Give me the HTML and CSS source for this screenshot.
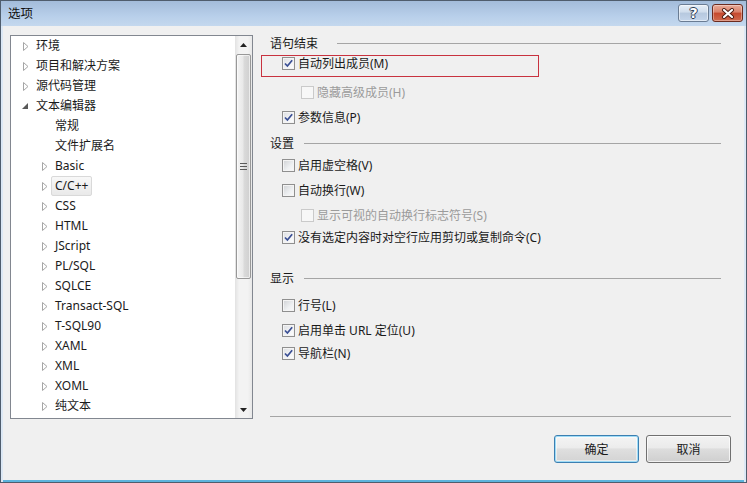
FILE: index.html
```html
<!DOCTYPE html>
<html lang="zh-CN">
<head>
<meta charset="utf-8">
<title>选项</title>
<link rel="stylesheet" href="styles.css">
</head>
<body>
<div class="window">
  <div class="titlebar">
    <span class="title">选项</span>
    <div class="caption-buttons">
      <div class="cap-btn help"><span class="q">?</span></div>
      <div class="cap-btn close">
        <svg width="14" height="11" viewBox="0 0 14 11"><path d="M3 2 L11 9 M11 2 L3 9" stroke="#4a1a10" stroke-width="4" stroke-linecap="round"/><path d="M3 2 L11 9 M11 2 L3 9" stroke="#ffffff" stroke-width="2.2" stroke-linecap="round"/></svg>
      </div>
    </div>
  </div>
  <div class="client">
    <div class="main">
      <div class="tree">
        <ul class="tree-list">
          <li class="node l1"><span class="exp"><svg width="6" height="9" viewBox="0 0 6 9"><path d="M0.5 0.5 L5 4.5 L0.5 8.5 Z" fill="#fff" stroke="#a6a6a6"/></svg></span><span class="label">环境</span></li>
          <li class="node l1"><span class="exp"><svg width="6" height="9" viewBox="0 0 6 9"><path d="M0.5 0.5 L5 4.5 L0.5 8.5 Z" fill="#fff" stroke="#a6a6a6"/></svg></span><span class="label">项目和解决方案</span></li>
          <li class="node l1"><span class="exp"><svg width="6" height="9" viewBox="0 0 6 9"><path d="M0.5 0.5 L5 4.5 L0.5 8.5 Z" fill="#fff" stroke="#a6a6a6"/></svg></span><span class="label">源代码管理</span></li>
          <li class="node l1"><span class="exp open"><svg width="6" height="6" viewBox="0 0 6 6"><path d="M6 0 L6 6 L0 6 Z" fill="#595959"/></svg></span><span class="label">文本编辑器</span></li>
          <li class="node l2"><span class="exp"></span><span class="label">常规</span></li>
          <li class="node l2"><span class="exp"></span><span class="label">文件扩展名</span></li>
          <li class="node l2"><span class="exp"><svg width="6" height="9" viewBox="0 0 6 9"><path d="M0.5 0.5 L5 4.5 L0.5 8.5 Z" fill="#fff" stroke="#a6a6a6"/></svg></span><span class="label">Basic</span></li>
          <li class="node l2"><span class="exp"><svg width="6" height="9" viewBox="0 0 6 9"><path d="M0.5 0.5 L5 4.5 L0.5 8.5 Z" fill="#fff" stroke="#a6a6a6"/></svg></span><span class="label selected">C/C++</span></li>
          <li class="node l2"><span class="exp"><svg width="6" height="9" viewBox="0 0 6 9"><path d="M0.5 0.5 L5 4.5 L0.5 8.5 Z" fill="#fff" stroke="#a6a6a6"/></svg></span><span class="label">CSS</span></li>
          <li class="node l2"><span class="exp"><svg width="6" height="9" viewBox="0 0 6 9"><path d="M0.5 0.5 L5 4.5 L0.5 8.5 Z" fill="#fff" stroke="#a6a6a6"/></svg></span><span class="label">HTML</span></li>
          <li class="node l2"><span class="exp"><svg width="6" height="9" viewBox="0 0 6 9"><path d="M0.5 0.5 L5 4.5 L0.5 8.5 Z" fill="#fff" stroke="#a6a6a6"/></svg></span><span class="label">JScript</span></li>
          <li class="node l2"><span class="exp"><svg width="6" height="9" viewBox="0 0 6 9"><path d="M0.5 0.5 L5 4.5 L0.5 8.5 Z" fill="#fff" stroke="#a6a6a6"/></svg></span><span class="label">PL/SQL</span></li>
          <li class="node l2"><span class="exp"><svg width="6" height="9" viewBox="0 0 6 9"><path d="M0.5 0.5 L5 4.5 L0.5 8.5 Z" fill="#fff" stroke="#a6a6a6"/></svg></span><span class="label">SQLCE</span></li>
          <li class="node l2"><span class="exp"><svg width="6" height="9" viewBox="0 0 6 9"><path d="M0.5 0.5 L5 4.5 L0.5 8.5 Z" fill="#fff" stroke="#a6a6a6"/></svg></span><span class="label">Transact-SQL</span></li>
          <li class="node l2"><span class="exp"><svg width="6" height="9" viewBox="0 0 6 9"><path d="M0.5 0.5 L5 4.5 L0.5 8.5 Z" fill="#fff" stroke="#a6a6a6"/></svg></span><span class="label">T-SQL90</span></li>
          <li class="node l2"><span class="exp"><svg width="6" height="9" viewBox="0 0 6 9"><path d="M0.5 0.5 L5 4.5 L0.5 8.5 Z" fill="#fff" stroke="#a6a6a6"/></svg></span><span class="label">XAML</span></li>
          <li class="node l2"><span class="exp"><svg width="6" height="9" viewBox="0 0 6 9"><path d="M0.5 0.5 L5 4.5 L0.5 8.5 Z" fill="#fff" stroke="#a6a6a6"/></svg></span><span class="label">XML</span></li>
          <li class="node l2"><span class="exp"><svg width="6" height="9" viewBox="0 0 6 9"><path d="M0.5 0.5 L5 4.5 L0.5 8.5 Z" fill="#fff" stroke="#a6a6a6"/></svg></span><span class="label">XOML</span></li>
          <li class="node l2"><span class="exp"><svg width="6" height="9" viewBox="0 0 6 9"><path d="M0.5 0.5 L5 4.5 L0.5 8.5 Z" fill="#fff" stroke="#a6a6a6"/></svg></span><span class="label">纯文本</span></li>
        </ul>
        <div class="vscroll">
          <div class="sb-arrow"><svg width="7" height="4" viewBox="0 0 7 4"><path d="M3.5 0 L7 4 L0 4 Z" fill="#222"/></svg></div>
          <div class="sb-track">
            <div class="sb-thumb">
              <svg width="7" height="7" viewBox="0 0 7 7"><path d="M0 0.5 H7 M0 3.5 H7 M0 6.5 H7" stroke="#5a5a5a"/></svg>
            </div>
          </div>
          <div class="sb-arrow"><svg width="7" height="4" viewBox="0 0 7 4"><path d="M0 0 L7 0 L3.5 4 Z" fill="#222"/></svg></div>
        </div>
      </div>

      <div class="options">
        <div class="group-head"><span>语句结束</span><span class="rule rule-wide"></span></div>
        <div class="opt mt2 marked">
          <span class="cb checked"><svg width="11" height="11" viewBox="0 0 11 11"><path d="M2 5.5 L4.4 8 L9.2 2.2" fill="none" stroke="#3a4f94" stroke-width="1.7"/></svg></span><span>自动列出成员(M)</span>
          <span class="highlight"></span>
        </div>
        <div class="opt sub mt9 disabled"><span class="cb"></span><span>隐藏高级成员(H)</span></div>
        <div class="opt mt5"><span class="cb checked"><svg width="11" height="11" viewBox="0 0 11 11"><path d="M2 5.5 L4.4 8 L9.2 2.2" fill="none" stroke="#3a4f94" stroke-width="1.7"/></svg></span><span>参数信息(P)</span></div>

        <div class="group-head mt8"><span>设置</span><span class="rule"></span></div>
        <div class="opt mt4"><span class="cb"></span><span>启用虚空格(V)</span></div>
        <div class="opt mt5"><span class="cb"></span><span>自动换行(W)</span></div>
        <div class="opt sub mt5 disabled"><span class="cb"></span><span>显示可视的自动换行标志符号(S)</span></div>
        <div class="opt mt2"><span class="cb checked"><svg width="11" height="11" viewBox="0 0 11 11"><path d="M2 5.5 L4.4 8 L9.2 2.2" fill="none" stroke="#3a4f94" stroke-width="1.7"/></svg></span><span>没有选定内容时对空行应用剪切或复制命令(C)</span></div>

        <div class="group-head mt23"><span>显示</span><span class="rule"></span></div>
        <div class="opt mt9"><span class="cb"></span><span>行号(L)</span></div>
        <div class="opt mt5"><span class="cb checked"><svg width="11" height="11" viewBox="0 0 11 11"><path d="M2 5.5 L4.4 8 L9.2 2.2" fill="none" stroke="#3a4f94" stroke-width="1.7"/></svg></span><span>启用单击 URL 定位(U)</span></div>
        <div class="opt mt3"><span class="cb checked"><svg width="11" height="11" viewBox="0 0 11 11"><path d="M2 5.5 L4.4 8 L9.2 2.2" fill="none" stroke="#3a4f94" stroke-width="1.7"/></svg></span><span>导航栏(N)</span></div>

        <div class="bottom-rule"></div>
      </div>
    </div>
    <div class="footer">
      <button class="btn default">确定</button>
      <button class="btn">取消</button>
    </div>
  </div>
</div>
</body>
</html>
```
FILE: styles.css
```css
* { box-sizing: border-box; }
html, body { margin: 0; padding: 0; }
body {
  width: 747px;
  height: 483px;
  overflow: hidden;
  font-family: "Noto Sans", "Noto Sans CJK SC", sans-serif;
  font-size: 12px;
  color: #1a1a1a;
}
.window {
  width: 747px;
  height: 483px;
  border: 1px solid #4f5d6d;
  background: #dce8f5;
  display: flex;
  flex-direction: column;
}
.titlebar {
  height: 25px;
  flex: none;
  display: flex;
  align-items: flex-start;
  justify-content: space-between;
  background: linear-gradient(#a3bcda, #b8cfea 60%, #c4d8ee);
}
.title {
  padding-left: 7px;
  line-height: 25px;
  font-size: 12.5px;
  color: #111;
}
.caption-buttons {
  display: flex;
  gap: 3px;
  padding-top: 3px;
  padding-right: 3px;
}
.cap-btn {
  width: 31px;
  height: 18px;
  border-radius: 3px;
  display: flex;
  align-items: center;
  justify-content: center;
}
.help {
  border: 1px solid #6a7c93;
  background: linear-gradient(#e6eef7, #cfdcec 45%, #b6c8de 50%, #c4d5ea);
  box-shadow: inset 0 0 0 1px rgba(255,255,255,0.5);
}
.help .q {
  font-family: "DejaVu Sans", sans-serif;
  font-weight: bold;
  font-size: 14px;
  line-height: 1;
  color: #fff;
  text-shadow: -1px 0 #2c3c52, 1px 0 #2c3c52, 0 -1px #2c3c52, 0 1px #2c3c52;
}
.close {
  border: 1px solid #6b2b1f;
  background: linear-gradient(#e9ab98, #d98069 45%, #c5482d 50%, #d06b4f);
  box-shadow: inset 0 0 0 1px rgba(255,255,255,0.35);
}
.client {
  flex: 1;
  margin: 0 2px 0 2px;
  border-bottom: 2px solid #5db3dc;
  background: #f0f0f0;
  display: flex;
  flex-direction: column;
}
.main {
  display: flex;
  padding: 9px 13px 0 7px;
}
.tree {
  width: 243px;
  height: 384px;
  flex: none;
  border: 1px solid #828790;
  background: #fff;
  display: flex;
  overflow: hidden;
}
.tree-list {
  list-style: none;
  margin: 0;
  padding: 0;
  flex: 1;
}
.node {
  height: 20px;
  display: flex;
  align-items: center;
  white-space: nowrap;
}
.l1 { padding-left: 12px; }
.l2 { padding-left: 31px; }
.exp {
  width: 13px;
  flex: none;
  display: flex;
  align-items: center;
}
.exp.open { margin-left: -1px; width: 14px; }
.label {
  line-height: 18px;
}
.label.selected {
  margin-left: -4px;
  padding: 0 3px;
  height: 20px;
  line-height: 18px;
  border: 1px solid #d9d9d9;
  border-radius: 2px;
  background: linear-gradient(#f8f8f8, #e9e9e9);
}
.vscroll {
  width: 17px;
  flex: none;
  display: flex;
  flex-direction: column;
  background: linear-gradient(to right, #e2e2e2, #f3f3f3 25%, #f3f3f3 75%, #e8e8e8);
}
.sb-arrow {
  height: 17px;
  flex: none;
  display: flex;
  align-items: center;
  justify-content: center;
}
.sb-track {
  flex: 1;
  padding-top: 1px;
}
.sb-thumb {
  margin: 0 1px;
  height: 225px;
  border: 1px solid #989898;
  border-radius: 2px;
  background: linear-gradient(to right, #f4f4f4, #e9e9e9 45%, #dadada 55%, #cfcfcf);
  box-shadow: inset 0 0 0 1px rgba(255,255,255,0.6);
  display: flex;
  align-items: center;
  justify-content: center;
}
.options {
  margin-left: 17px;
  flex: 1;
  height: 384px;
  display: flex;
  flex-direction: column;
}
.group-head {
  height: 16px;
  display: flex;
  align-items: center;
  margin-right: 10px;
  white-space: nowrap;
}
.rule {
  flex: 1;
  margin-left: 10px;
  border-top: 1px solid #a5a5a5;
}
.rule-wide { margin-left: 19px; }
.opt {
  position: relative;
  height: 20px;
  margin-left: 12px;
  display: flex;
  align-items: center;
  white-space: nowrap;
}
.opt.sub { margin-left: 31px; }
.cb {
  width: 13px;
  height: 13px;
  flex: none;
  margin-right: 3px;
  border: 1px solid #8f8f8f;
  background: linear-gradient(135deg, #cfd1d4, #eef0f2 60%, #fafafa);
  box-shadow: inset 0 0 0 1px #f4f4f4;
  display: flex;
  align-items: center;
  justify-content: center;
}
.cb.checked {
  background: linear-gradient(135deg, #dcdee2, #f3f4f6 60%, #ffffff);
}
.disabled { color: #9b9b9b; }
.disabled .cb {
  border-color: #cacaca;
  background: #f7f7f7;
  box-shadow: none;
}
.highlight {
  position: absolute;
  left: -21px;
  top: 2px;
  width: 278px;
  height: 22px;
  border: 1px solid #c8323f;
  pointer-events: none;
}
.mt2 { margin-top: 2px; }
.mt3 { margin-top: 3px; }
.mt4 { margin-top: 4px; }
.mt5 { margin-top: 5px; }
.mt8 { margin-top: 8px; }
.mt9 { margin-top: 9px; }
.mt23 { margin-top: 23px; }
.bottom-rule {
  margin-top: auto;
  margin-bottom: 2px;
  border-top: 1px solid #a5a5a5;
}
.footer {
  display: flex;
  justify-content: flex-end;
  gap: 7px;
  padding: 16px 13px 0 0;
}
.btn {
  width: 85px;
  height: 28px;
  font-family: "Noto Sans", "Noto Sans CJK SC", sans-serif;
  font-size: 12px;
  color: #1a1a1a;
  border: 1px solid #707070;
  border-radius: 3px;
  background: linear-gradient(#f2f2f2, #ebebeb 45%, #dddddd 50%, #cfcfcf);
  box-shadow: inset 0 0 0 1px rgba(255,255,255,0.7);
  padding: 0;
}
.btn.default {
  border-color: #3c7fb1;
  box-shadow: inset 0 0 0 1px #9fdcf7, inset 0 0 0 2px rgba(255,255,255,0.5);
  background: linear-gradient(#f4f4f4, #ececec 45%, #dfdfdf 50%, #d3d3d3);
}
```
